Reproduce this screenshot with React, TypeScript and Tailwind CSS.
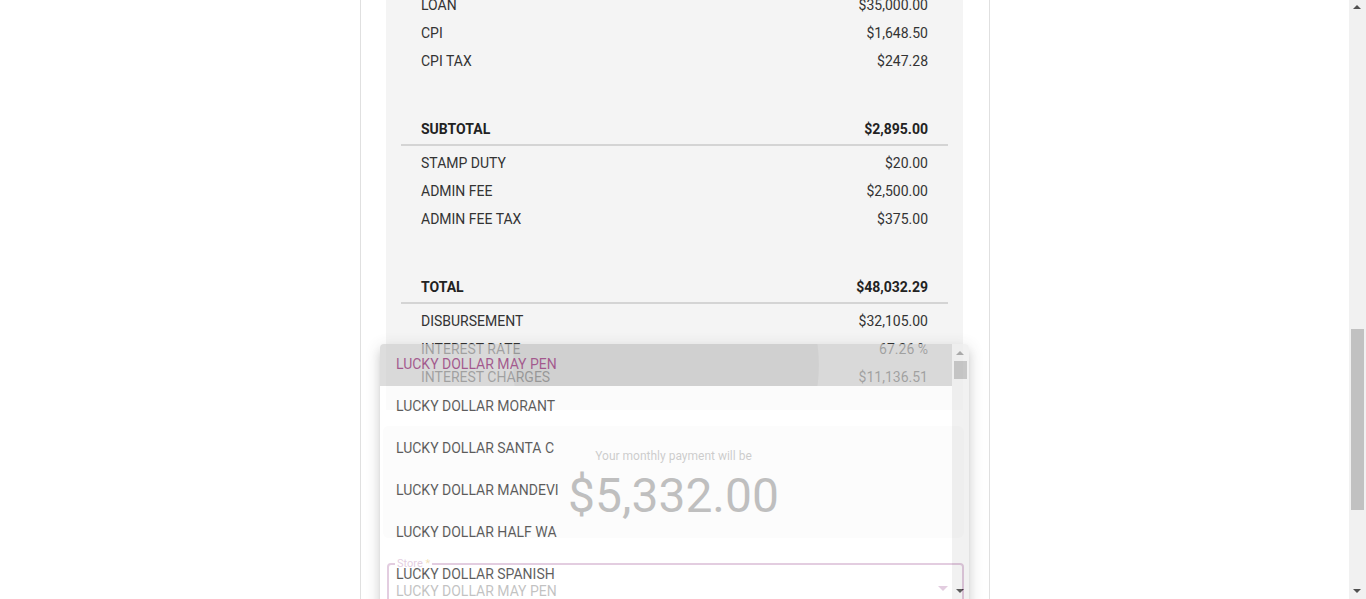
import { FC } from "react";

type Line = { label: string; value: string; bold?: boolean };

const Row: FC<Line> = ({ label, value, bold }) => (
  <div
    className={
      bold
        ? "flex h-[28px] items-center justify-between px-[35px] text-[14px] font-bold text-[#222]"
        : "flex h-[28px] items-center justify-between px-[35px] text-[14px] text-[#333]"
    }
  >
    <span>{label}</span>
    <span>{value}</span>
  </div>
);

const Divider: FC = () => <div className="mx-[15px] mt-[1px] mb-[3px] h-[2px] bg-[#d4d4d4]" />;

const App: FC = () => {
  const charges: Line[] = [
    { label: "LOAN", value: "$35,000.00" },
    { label: "CPI", value: "$1,648.50" },
    { label: "CPI TAX", value: "$247.28" },
  ];
  const fees: Line[] = [
    { label: "STAMP DUTY", value: "$20.00" },
    { label: "ADMIN FEE", value: "$2,500.00" },
    { label: "ADMIN FEE TAX", value: "$375.00" },
  ];
  const summary: Line[] = [
    { label: "DISBURSEMENT", value: "$32,105.00" },
    { label: "INTEREST RATE", value: "67.26 %" },
    { label: "INTEREST CHARGES", value: "$11,136.51" },
  ];
  const stores = [
    "LUCKY DOLLAR MAY PEN",
    "LUCKY DOLLAR MORANT",
    "LUCKY DOLLAR SANTA C",
    "LUCKY DOLLAR MANDEVI",
    "LUCKY DOLLAR HALF WA",
    "LUCKY DOLLAR SPANISH",
    "LUCKY DOLLAR OCHO RI",
  ];

  return (
    <div className="flex h-[599px] w-full overflow-hidden bg-white font-['Roboto','Liberation_Sans',sans-serif]">
      <div className="flex flex-1">
        {/* Card */}
        <div className="relative ml-[360px] flow-root h-full w-[630px] border-x border-[#e0e0e0] pr-[25px] pl-[25px]">
          {/* Breakdown panel */}
          <div className="-mt-[9px] mr-[1px] bg-[#f4f4f4] pb-[19px]">
            {charges.map((r) => (
              <Row key={r.label} {...r} />
            ))}
            <div className="mt-[40px]">
              <Row label="SUBTOTAL" value="$2,895.00" bold />
            </div>
            <Divider />
            {fees.map((r) => (
              <Row key={r.label} {...r} />
            ))}
            <div className="mt-[40px]">
              <Row label="TOTAL" value="$48,032.29" bold />
            </div>
            <Divider />
            {summary.map((r) => (
              <Row key={r.label} {...r} />
            ))}
          </div>

          {/* Monthly payment */}
          <div className="mt-[16px] -ml-[3px] flex h-[112px] flex-col items-center rounded-[6px] bg-[#f5f5f5] pt-[23px]">
            <div className="text-[12px] leading-[14px] text-[#555]">Your monthly payment will be</div>
            <div className="mt-[9px] text-[48px] leading-none font-normal text-[#2a2a2a]">$5,332.00</div>
          </div>

          {/* Store select */}
          <div className="relative mt-[25px] ml-[1px] h-[56px] rounded-[4px] border-2 border-[#a25898]">
            <div className="absolute -top-[8px] left-[6px] bg-white px-[2px] text-[11px] leading-[13px] text-[#a25898]">
              Store <span className="text-[#d4a017]">*</span>
            </div>
            <div className="absolute top-[16px] left-[7px] text-[14px] text-[#333]">LUCKY DOLLAR MAY PEN</div>
            <div className="absolute top-[21px] right-[14px] h-0 w-0 border-x-[5px] border-t-[5px] border-x-transparent border-t-[#a25898]" />
          </div>

          {/* Open dropdown menu (mid fade-in) */}
          <div className="absolute top-[344px] left-[19px] h-[300px] w-[589px] opacity-70">
            <div className="relative h-full overflow-hidden rounded-[4px] bg-white pr-[17px] shadow-[0_5px_5px_-3px_rgba(0,0,0,0.2),0_8px_10px_1px_rgba(0,0,0,0.14),0_3px_14px_2px_rgba(0,0,0,0.12)]">
              {stores.map((s, i) =>
                i === 0 ? (
                  <div key={s} className="relative flex h-[42px] items-center overflow-hidden bg-[#cfcfcf] pb-[2px] pl-[16px] text-[14px] text-[#821764]">
                    <div className="absolute top-[-132px] left-[133px] h-[306px] w-[306px] rounded-full bg-black/[0.06]" />
                    <span className="relative">{s}</span>
                  </div>
                ) : (
                  <div key={s} className="flex h-[42px] items-center pb-[2px] pl-[16px] text-[14px] text-[#1a1a1a]">
                    {s}
                  </div>
                )
              )}
              {/* menu scrollbar */}
              <div className="absolute top-0 right-0 h-full w-[17px] bg-[#ececec]">
                <div className="absolute top-[7px] left-[4px] h-0 w-0 border-x-[4px] border-b-[4px] border-x-transparent border-b-[#8a8a8a]" />
                <div className="absolute top-[17px] left-[2px] h-[18px] w-[13px] bg-[#b0b0b0]" />
                <div className="absolute top-[245px] left-[4px] h-0 w-0 border-x-[4px] border-t-[4px] border-x-transparent border-t-[#1a1a1a]" />
              </div>
            </div>
          </div>
        </div>
      </div>

      {/* Page scrollbar */}
      <div className="relative h-full w-[17px] bg-[#f1f1f1]">
        <div className="absolute top-[5px] left-[4px] h-0 w-0 border-x-[4px] border-b-[4px] border-x-transparent border-b-[#505050]" />
        <div className="absolute top-[329px] left-[2px] h-[181px] w-[13px] bg-[#c1c1c1]" />
        <div className="absolute top-[589px] left-[4px] h-0 w-0 border-x-[4px] border-t-[4px] border-x-transparent border-t-[#505050]" />
      </div>
    </div>
  );
};

export default App;
